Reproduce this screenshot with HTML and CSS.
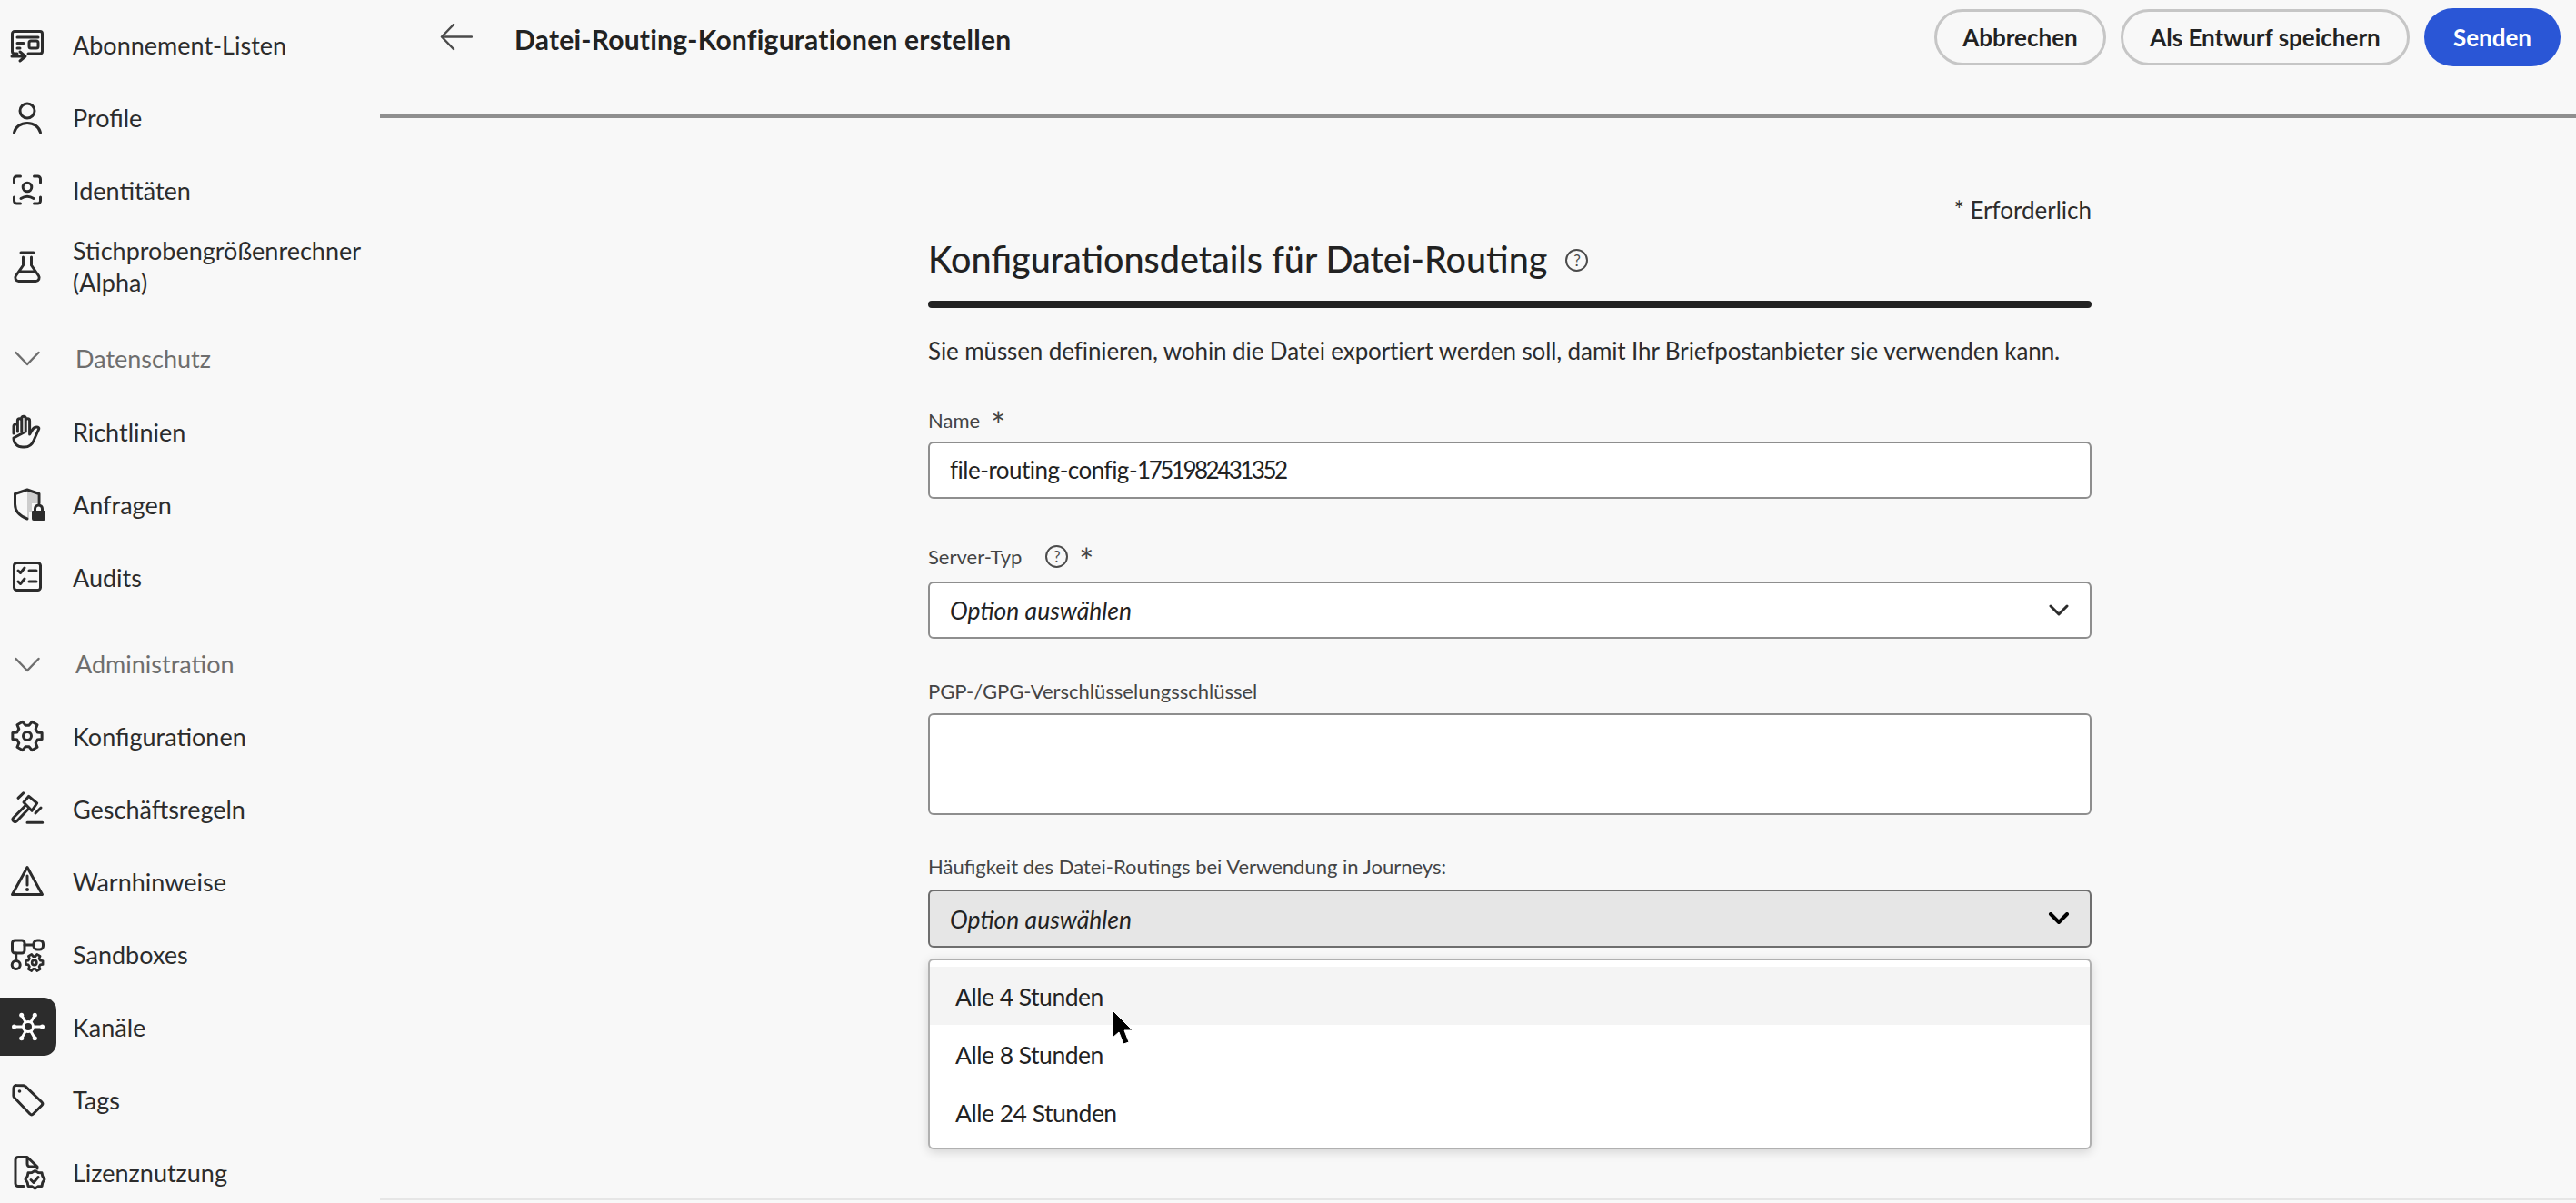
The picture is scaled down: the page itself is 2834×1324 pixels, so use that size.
FILE: index.html
```html
<!DOCTYPE html>
<html lang="de">
<head>
    <meta charset="UTF-8">
    <title>Datei-Routing-Konfigurationen erstellen</title>
    <link rel="stylesheet" href="styles.css">
</head>
<body>
    <nav class="sidebar">
        <a class="nav-item">
            <svg class="icon" viewBox="0 0 36 36"><path d="M7 28H4a2.500 2.500 0 0 1-2.500-2.500V6A2.500 2.500 0 0 1 4 3.500h28A2.500 2.500 0 0 1 34.500 6v19.500A2.500 2.500 0 0 1 32 28H19"/><path d="M1 31h14m-5-5 6 5-6 5M7 10h23M7 16.500h7M7 22h3"/><rect x="20" y="14" width="10" height="8" rx="2"/></svg>
            <span>Abonnement-Listen</span>
        </a>
        <a class="nav-item">
            <svg class="icon" viewBox="0 0 36 36"><circle cx="18" cy="11" r="8"/><path d="M3.500 35C5 28.500 11 24.500 18 24.500S31 28.500 32.500 35"/></svg>
            <span>Profile</span>
        </a>
        <a class="nav-item">
            <svg class="icon" viewBox="0 0 36 36"><path d="M3.500 10V6a3 3 0 0 1 3-3h4M25.500 3h4a3 3 0 0 1 3 3v4M32.500 26v4a3 3 0 0 1-3 3h-4M10.500 33h-4a3 3 0 0 1-3-3v-4"/><circle cx="18" cy="15" r="4.800"/><path d="M11 27.500q7-4.500 14 0"/></svg>
            <span>Identitäten</span>
        </a>
        <a class="nav-item nav-item-tall">
            <svg class="icon" viewBox="0 0 36 36"><path d="M11 3h14M13.500 8v9L5.500 28.500A3.800 3.800 0 0 0 8.500 34.500h19a3.800 3.800 0 0 0 3-6L22.500 17V8M9.500 24h17"/></svg>
            <span>Stichprobengrößenrechner (Alpha)</span>
        </a>
        <div class="nav-section">
            <svg class="icon section-chevron" viewBox="0 0 36 36"><path d="M5.500 12 18 25 30.500 12"/></svg>
            <span>Datenschutz</span>
        </div>
        <a class="nav-item">
            <svg class="icon" viewBox="0 0 36 36"><path d="M3 20v-8a2.200 2.200 0 0 1 4.400 0v6M7.400 18V6a2.200 2.200 0 0 1 4.400 0v12M11.800 18V3.500a2.200 2.200 0 0 1 4.400 0V18M16.200 18V6a2.200 2.200 0 0 1 4.400 0v15l3-5c1-2 3-3 5-3 1.500 0 2.500 .8 2.200 2L25 28c-2 5-5 7-10 7h-2C7 35 3 31 3 25z"/></svg>
            <span>Richtlinien</span>
        </a>
        <a class="nav-item">
            <svg class="icon" viewBox="0 0 36 36"><path class="icon-shade" d="M18 3 29 6.500V17h-6v9h-3v7l-2 1z"/><path d="M18 34C10 31 4.500 26 4.500 18V6.500L18 2l13 4.500V17"/><path class="icon-solid" d="M25 25h-1a1 1 0 0 0-1 1v8a2 2 0 0 0 2 2h11a2 2 0 0 0 2-2v-8a1 1 0 0 0-1-1h-1v-2a5.500 5.500 0 0 0-11 0zm3 0v-2a2.500 2.500 0 0 1 5 0v2z"/></svg>
            <span>Anfragen</span>
        </a>
        <a class="nav-item">
            <svg class="icon" viewBox="0 0 36 36"><rect x="3.500" y="2.500" width="29" height="30" rx="3"/><path d="M8 11l2.500 2.500L15 8M8 23l2.500 2.500L15 20M20 11h8M20 23h8"/></svg>
            <span>Audits</span>
        </a>
        <div class="nav-section nav-section-short">
            <svg class="icon section-chevron" viewBox="0 0 36 36"><path d="M5.500 12 18 25 30.500 12"/></svg>
            <span>Administration</span>
        </div>
        <a class="nav-item">
            <svg class="icon" viewBox="0 0 36 36"><path d="M29.280 13.900 34.140 14.570V21.430L29.280 22.100 27.190 25.710 29.040 30.260 23.100 33.690 20.080 29.820H15.920L12.900 33.690 6.960 30.260 8.810 25.710 6.720 22.100 1.860 21.430V14.570L6.720 13.900 8.810 10.290 6.960 5.740 12.900 2.310 15.920 6.180H20.080L23.100 2.310 29.040 5.740 27.190 10.290z"/><circle cx="18" cy="18" r="4.500"/></svg>
            <span>Konfigurationen</span>
        </a>
        <a class="nav-item">
            <svg class="icon" viewBox="0 0 36 36"><path d="M19.700 4.300 28.700 12 23 20.300 14 11zM16.500 14 2.800 28a2.600 2.600 0 0 0 3.700 3.700L20 17.500M8 6.300 13.700.8M27 23l6-6M18 33.300h16.700"/></svg>
            <span>Geschäftsregeln</span>
        </a>
        <a class="nav-item">
            <svg class="icon" viewBox="0 0 36 36"><path d="M18 2.500 34.500 32.500H1.500z"/><path d="M18 12v10"/><circle class="icon-solid" cx="18" cy="27" r="2"/></svg>
            <span>Warnhinweise</span>
        </a>
        <a class="nav-item">
            <svg class="icon" viewBox="0 0 36 36"><rect x="1.500" y="3" width="13.500" height="14" rx="3"/><rect x="25" y="3" width="10.500" height="10" rx="4"/><circle cx="5.700" cy="30" r="4.500"/><path d="M15 8h10M5.700 17v8.500"/><g transform="translate(15.300 17) scale(.58)"><path class="gear-small" d="M29.280 13.900 34.140 14.570V21.430L29.280 22.100 27.190 25.710 29.040 30.260 23.100 33.690 20.080 29.820H15.920L12.900 33.690 6.960 30.260 8.810 25.710 6.720 22.100 1.860 21.430V14.570L6.720 13.900 8.810 10.290 6.960 5.740 12.900 2.310 15.920 6.180H20.080L23.100 2.310 29.040 5.740 27.190 10.290z"/><circle class="gear-small" cx="18" cy="18" r="4.500"/></g></svg>
            <span>Sandboxes</span>
        </a>
        <a class="nav-item active">
            <span class="icon-tile"><svg class="icon" viewBox="0 0 36 36"><path d="M2.500 18h31M10.700 5.300l14.600 25.400M25.300 5.300 10.700 30.700"/><circle class="hub" cx="18" cy="18" r="5.500"/><circle class="node" cx="2.500" cy="18" r="2.500"/><circle class="node" cx="33.500" cy="18" r="2.500"/><circle class="node" cx="10.700" cy="5.300" r="2.500"/><circle class="node" cx="25.300" cy="5.300" r="2.500"/><circle class="node" cx="10.700" cy="30.700" r="2.500"/><circle class="node" cx="25.300" cy="30.700" r="2.500"/></svg></span>
            <span>Kanäle</span>
        </a>
        <a class="nav-item">
            <svg class="icon" viewBox="0 0 36 36"><path d="M3 5.500A3 3 0 0 1 6.200 2.500L14 2.800a3 3 0 0 1 2 .9L34 21a2.500 2.500 0 0 1 0 3.500L24.500 34a2.500 2.500 0 0 1-3.500 0L3.800 16a3 3 0 0 1-.9-2z"/><circle class="icon-solid" cx="9.500" cy="9" r="1.800"/></svg>
            <span>Tags</span>
        </a>
        <a class="nav-item">
            <svg class="icon" viewBox="0 0 36 36"><path d="M14 33.500H8A3 3 0 0 1 5 30.500V4.500A3 3 0 0 1 8 1.500H18L29 12v2M18 1.500V9a3 3 0 0 0 3 3h8"/><path d="M26.500 16.500 30 18.500 34 18.800 34.800 22.500 37 26 34.800 29.500 34 33.500 30 33.800 26.500 36 23 33.800 19 33.500 18.200 29.500 16 26 18.200 22.500 19 18.800 23 18.500z"/><path d="M22 26.500l3 3 5-6"/></svg>
            <span>Lizenznutzung</span>
        </a>
    </nav>

    <main class="main">
        <header class="topbar">
            <svg class="back-arrow" viewBox="0 0 36 30"><path d="M35 14.500H2M15 1 2 14.500 15 28"/></svg>
            <h1 class="page-title">Datei-Routing-Konfigurationen erstellen</h1>
            <div class="actions">
                <button class="btn">Abbrechen</button>
                <button class="btn btn-draft">Als Entwurf speichern</button>
                <button class="btn btn-primary">Senden</button>
            </div>
        </header>

        <form class="form">
            <p class="required-note">* Erforderlich</p>
            <div class="form-title">
                <h2>Konfigurationsdetails für Datei-Routing</h2>
                <span class="help help-title">?</span>
            </div>
            <div class="title-bar"></div>
            <p class="intro">Sie müssen definieren, wohin die Datei exportiert werden soll, damit Ihr Briefpostanbieter sie verwenden kann.</p>

            <div class="label label-name">Name <span class="star">*</span></div>
            <div class="field field-text">file-routing-config-<span class="digits">1751982431352</span></div>

            <div class="label label-server">Server-Typ <span class="help">?</span> <span class="star">*</span></div>
            <div class="field select">
                <em>Option auswählen</em>
                <svg class="chevron" viewBox="0 0 24 14"><path d="M3 2l9 9 9-9"/></svg>
            </div>

            <div class="label label-pgp">PGP-/GPG-Verschlüsselungsschlüssel</div>
            <div class="field textarea"></div>

            <div class="label label-freq">Häufigkeit des Datei-Routings bei Verwendung in Journeys:</div>
            <div class="select-wrap">
                <div class="field select open">
                    <em>Option auswählen</em>
                    <svg class="chevron" viewBox="0 0 24 14"><path d="M3 2l9 9 9-9"/></svg>
                </div>
                <ul class="menu">
                    <li class="menu-hover">Alle 4 Stunden</li>
                    <li>Alle 8 Stunden</li>
                    <li>Alle 24 Stunden</li>
                </ul>
                <svg class="cursor" viewBox="0 0 24 40"><path d="M1 1v30l7-6 5 13 6-2-5-13h9z"/></svg>
            </div>
        </form>
    </main>
</body>
</html>
```

FILE: styles.css
```css
* {
    box-sizing: border-box;
}
html, body {
    height: 100%;
    margin: 0;
}
body {
    display: flex;
    height: 1324px;
    overflow: hidden;
    background: #f8f8f8;
    color: #2c2c2c;
    font-family: Lato, "Open Sans", sans-serif;
    font-size: 27px;
}

/* sidebar */
.sidebar {
    width: 418px;
    flex-shrink: 0;
    padding-top: 9px;
}
.nav-item {
    display: flex;
    align-items: center;
    height: 80px;
    gap: 32px;
    padding-left: 12px;
    line-height: 35px;
}
.nav-item-tall {
    height: 88px;
}
.nav-section {
    display: flex;
    align-items: center;
    height: 98px;
    padding: 16px 0 0 12px;
    gap: 35px;
    color: #6e6e6e;
}
.nav-section-short {
    height: 95px;
}
.icon {
    width: 36px;
    height: 36px;
    flex-shrink: 0;
    overflow: visible;
    fill: none;
    stroke: #2c2c2c;
    stroke-width: 3;
    stroke-linecap: round;
    stroke-linejoin: round;
}
.section-chevron {
    stroke: #6e6e6e;
    stroke-width: 2.500;
}
.icon-solid {
    fill: #2c2c2c;
    stroke: none;
}
.icon-shade {
    fill: #cdcdcd;
    stroke: none;
}
.gear-small {
    stroke-width: 4.600;
}
.icon-tile {
    display: flex;
    align-items: center;
    justify-content: center;
    width: 62px;
    height: 64px;
    margin-left: -12px;
    margin-right: -14px;
    border-radius: 0 14px 14px 0;
    background: #2c2c2c;
}
.active .icon {
    stroke: #fff;
}
.active .node {
    fill: #fff;
    stroke: none;
}
.active .hub {
    fill: #2c2c2c;
}

/* main */
.main {
    flex: 1;
    height: 1321px;
    border-bottom: 3px solid #e6e6e6;
}
.topbar {
    display: flex;
    align-items: center;
    height: 130px;
    padding: 0 17px 44px 66px;
    border-bottom: 4px solid #8f8f8f;
}
.back-arrow {
    width: 36px;
    height: 30px;
    fill: none;
    stroke: #4b4b4b;
    stroke-width: 2.500;
    stroke-linecap: round;
    stroke-linejoin: round;
}
.page-title {
    margin: 4px 0 0 46px;
    font-size: 30px;
    font-weight: 700;
    letter-spacing: .23px;
    color: #222;
}
.actions {
    display: flex;
    align-items: center;
    gap: 16px;
    margin-left: auto;
}
.btn {
    width: 189px;
    height: 62px;
    border: 3px solid #c6c6c6;
    border-radius: 31px;
    background: #f8f8f8;
    color: #222;
    font-family: inherit;
    font-size: 26px;
    font-weight: 700;
}
.btn-draft {
    width: 318px;
}
.btn-primary {
    width: 150px;
    height: 64px;
    border: none;
    border-radius: 32px;
    background: #2a56d6;
    color: #fff;
}

/* form */
.form {
    width: 1280px;
    margin-left: 603px;
}
.required-note {
    margin: 0;
    padding-top: 85px;
    line-height: 32px;
    text-align: right;
    font-size: 26px;
}
.form-title {
    display: flex;
    align-items: center;
    gap: 20px;
    height: 50px;
    margin-top: 12px;
}
.form-title h2 {
    margin: 0;
    font-size: 39.500px;
    font-weight: 500;
    color: #222;
}
.title-bar {
    height: 8px;
    margin-top: 22px;
    border-radius: 4px;
    background: #222;
}
.intro {
    margin: 30px 0 0;
    line-height: 34px;
    font-size: 26px;
    letter-spacing: -.1px;
    white-space: nowrap;
}
.label {
    display: flex;
    align-items: center;
    gap: 12px;
    height: 30px;
    font-size: 22px;
    color: #444;
}
.label-name {
    margin-top: 44px;
    margin-bottom: 9px;
}
.label-server {
    margin-top: 48px;
    margin-bottom: 13px;
}
.label-pgp {
    margin-top: 42px;
    margin-bottom: 10px;
}
.label-freq {
    margin-top: 41px;
    margin-bottom: 11px;
}
.star {
    font-size: 38px;
    line-height: 30px;
    padding-top: 9px;
}
.help {
    display: inline-flex;
    align-items: center;
    justify-content: center;
    width: 25px;
    height: 25px;
    margin-left: 14px;
    border: 2.500px solid #4b4b4b;
    border-radius: 50%;
    font-size: 17px;
    color: #4b4b4b;
}
.help-title {
    margin-left: 0;
    margin-top: 4px;
}
.field {
    height: 63px;
    padding: 0 22px;
    border: 2px solid #8e8e8e;
    border-radius: 6px;
    background: #fff;
    line-height: 59px;
    color: #222;
    font-size: 26.500px;
}
.field-text {
    font-size: 26px;
    letter-spacing: -.5px;
}
.digits {
    letter-spacing: -2.500px;
}
.select {
    display: flex;
    align-items: center;
    justify-content: space-between;
    padding-right: 22px;
}
.select em {
    padding-top: 2px;
}
.chevron {
    width: 24px;
    height: 14px;
    fill: none;
    stroke: #2c2c2c;
    stroke-width: 3;
    stroke-linecap: round;
    stroke-linejoin: round;
}
.textarea {
    height: 112px;
}
.select-wrap {
    position: relative;
}
.open {
    height: 64px;
    background: #e6e6e6;
    border-color: #6e6e6e;
}
.open .chevron {
    stroke: #000;
    stroke-width: 4;
}
.menu {
    position: absolute;
    top: 76px;
    left: 0;
    right: 0;
    height: 210px;
    margin: 0;
    padding: 7px 0;
    list-style: none;
    border: 2px solid #b0b0b0;
    border-radius: 6px;
    background: #fff;
    box-shadow: 0 3px 12px rgba(0, 0, 0, .15);
}
.menu li {
    height: 64px;
    padding-left: 28px;
    line-height: 66px;
    font-size: 26.500px;
    letter-spacing: -.5px;
    color: #222;
}
.menu .menu-hover {
    background: #f4f4f4;
}
.cursor {
    position: absolute;
    top: 132px;
    left: 202px;
    width: 24px;
    height: 40px;
    fill: #000;
    stroke: #fff;
    stroke-width: 1;
}
```
